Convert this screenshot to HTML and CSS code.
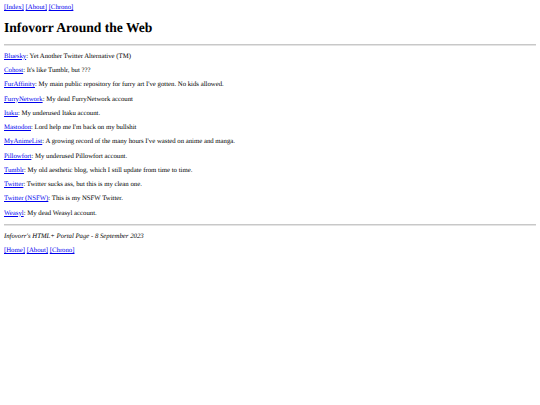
FILE: index.html
```html
<!DOCTYPE html>
<html lang="en">
<head>
  <meta charset="UTF-8">
  <title>Infovorr Around the Web</title>
  <link rel="stylesheet" href="styles.css">
</head>
<body>
  <div class="nav">
    <a href="#">[Index]</a> <a href="#">[About]</a> <a href="#">[Chrono]</a>
  </div>

  <h1>Infovorr Around the Web</h1>
  <hr>

  <p><a href="#">Bluesky</a>: Yet Another Twitter Alternative (TM)</p>
  <p><a href="#">Cohost</a>: It's like Tumblr, but ???</p>
  <p><a href="#">FurAffinity</a>: My main public repository for furry art I've gotten. No kids allowed.</p>
  <p><a href="#">FurryNetwork</a>: My dead FurryNetwork account</p>
  <p><a href="#">Itaku</a>: My underused Itaku account.</p>
  <p><a href="#">Mastodon</a>: Lord help me I'm back on my bullshit</p>
  <p><a href="#">MyAnimeList</a>: A growing record of the many hours I've wasted on anime and manga.</p>
  <p><a href="#">Pillowfort</a>: My underused Pillowfort account.</p>
  <p><a href="#">Tumblr</a>: My old aesthetic blog, which I still update from time to time.</p>
  <p><a href="#">Twitter</a>: Twitter sucks ass, but this is my clean one.</p>
  <p><a href="#">Twitter (NSFW)</a>: This is my NSFW Twitter.</p>
  <p><a href="#">Weasyl</a>: My dead Weasyl account.</p>

  <hr>
  <p class="footer"><i>Infovorr's HTML+ Portal Page - 8 September 2023</i></p>
  <p><a href="#">[Home]</a> <a href="#">[About]</a> <a href="#">[Chrono]</a></p>
</body>
</html>
```

FILE: styles.css
```css
body {
  margin: 4px;
  font-family: "Liberation Serif", "Times New Roman", serif;
  font-size: 6.75px;
  line-height: 7.6px;
  color: #000;
  background: #fff;
  text-rendering: geometricPrecision;
}

a {
  color: #0000ee;
}

.nav {
  margin: 0;
}

h1 {
  font-size: 13.6px;
  line-height: 16px;
  margin: 8px 0 8.4px;
}

hr {
  border: none;
  border-top: 1px solid #c8c8c8;
  border-bottom: 1px solid #e4e4e4;
  margin: 6.7px 0;
}

p {
  margin: 6.7px 0;
}
```
